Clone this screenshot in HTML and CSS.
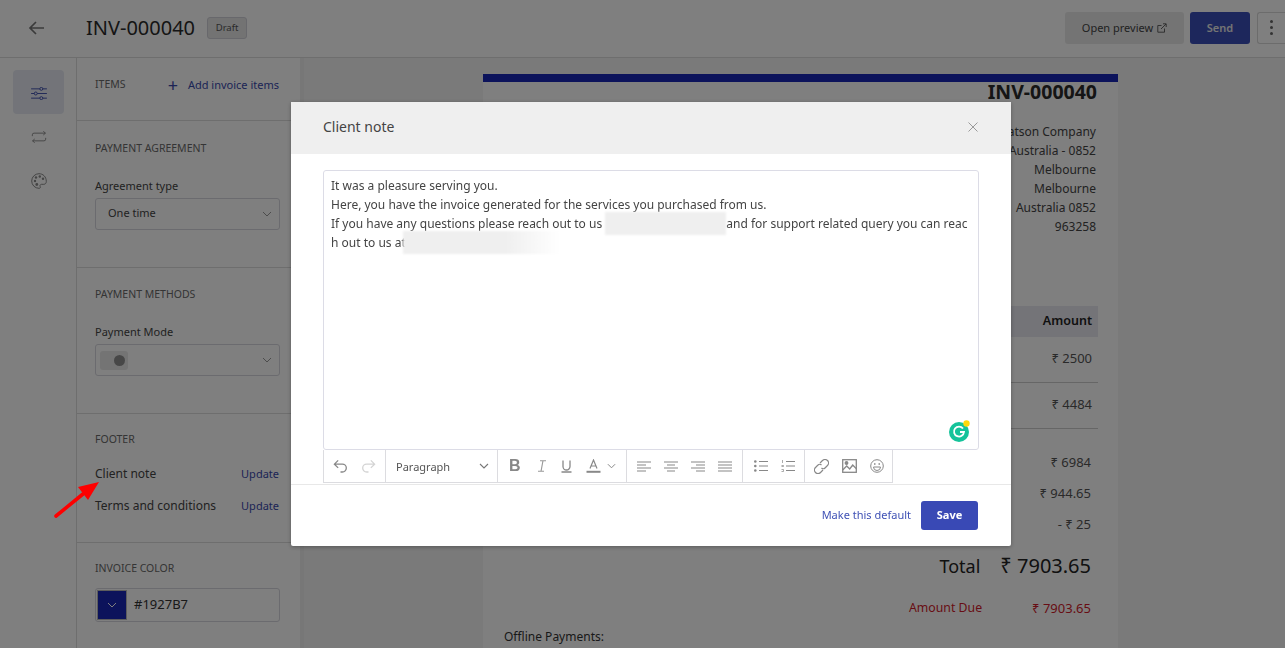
FILE: index.html
```html
<!DOCTYPE html>
<html lang="en">
<head>
<meta charset="utf-8">
<title>INV-000040</title>
<link rel="stylesheet" href="styles.css">
</head>
<body>
<div class="page">
  <header class="topbar">
    <svg class="back" width="18" height="16" viewBox="0 0 18 16"><path d="M16 8H2M8 2L2 8l6 6" fill="none" stroke="#777" stroke-width="1.7"/></svg>
    <h1 class="doc-title">INV-000040</h1>
    <span class="badge">Draft</span>
    <div class="top-actions">
      <button class="btn-preview">Open preview
        <svg width="10" height="10" viewBox="0 0 10 10"><path d="M7.5 5.5v3.7H.8V2.5h3.7M4 6l5-5M6 .8h3.2V4" fill="none" stroke="#555" stroke-width=".9"/></svg>
      </button>
      <button class="btn-send">Send</button>
      <button class="btn-more" aria-label="More"><i></i><i></i><i></i></button>
    </div>
  </header>
  <div class="workspace">
    <nav class="rail">
      <div class="rail-item active">
        <svg width="16" height="13" viewBox="0 0 17 14" fill="none" stroke="#3949ab" stroke-width="1"><path d="M0 2h17M0 7h17M0 12h17"/><circle cx="11" cy="2" r="1.6" fill="#e6e9f3"/><circle cx="5" cy="7" r="1.6" fill="#e6e9f3"/><circle cx="11" cy="12" r="1.6" fill="#e6e9f3"/></svg>
      </div>
      <div class="rail-item">
        <svg width="16" height="12" viewBox="0 0 17 14" fill="none" stroke="#8a8a8a" stroke-width="1.1"><path d="M.7 6V4.5A2 2 0 0 1 2.7 2.5H16M13.500 .3L16 2.500 13.500 4.700M16.300 8v1.500a2 2 0 0 1-2 2H1M3.500 9.300L1 11.500l2.500 2.200"/></svg>
      </div>
      <div class="rail-item">
        <svg width="16" height="16" viewBox="0 0 16 16"><path d="M8 .7a7.300 7.300 0 1 0 0 14.600c1.500 0 1.600-1 1.200-1.700-.6-1 .1-2.300 1.300-2.300h2.300c1.600 0 2.500-1.200 2.500-2.800C15.300 3.700 12 .7 8 .7z" fill="none" stroke="#8a8a8a" stroke-width="1"/><g fill="#8a8a8a"><circle cx="4" cy="8" r="1.200"/><circle cx="5" cy="4.500" r="1.200"/><circle cx="8.800" cy="3.500" r="1.200"/><circle cx="12" cy="5.800" r="1.200"/><circle cx="5.800" cy="11.500" r="1.400"/></g></svg>
      </div>
    </nav>
    <aside class="panel">
      <section class="sec sec-items">
        <h2 class="sec-title">ITEMS</h2>
        <a class="add-link"><span class="plus">+</span>Add invoice items</a>
      </section>
      <section class="sec sec-agreement">
        <h2 class="sec-title">PAYMENT AGREEMENT</h2>
        <label class="field-label">Agreement type</label>
        <div class="select">One time
          <svg class="chev" width="10" height="6" viewBox="0 0 10 6"><path d="M1 1l4 4 4-4" fill="none" stroke="#999"/></svg>
        </div>
      </section>
      <section class="sec sec-methods">
        <h2 class="sec-title">PAYMENT METHODS</h2>
        <label class="field-label">Payment Mode</label>
        <div class="select select-toggle"><span class="toggle"><i></i></span>
          <svg class="chev" width="10" height="6" viewBox="0 0 10 6"><path d="M1 1l4 4 4-4" fill="none" stroke="#999"/></svg>
        </div>
      </section>
      <section class="sec sec-footer">
        <h2 class="sec-title">FOOTER</h2>
        <div class="foot-row"><span>Client note</span><a>Update</a></div>
        <div class="foot-row"><span>Terms and conditions</span><a>Update</a></div>
      </section>
      <section class="sec sec-color">
        <h2 class="sec-title">INVOICE COLOR</h2>
        <div class="color-input">
          <span class="swatch"><svg width="10" height="6" viewBox="0 0 10 6"><path d="M1 1l4 4 4-4" fill="none" stroke="#fff"/></svg></span>
          <span class="hex">#1927B7</span>
        </div>
      </section>
    </aside>
    <div class="scroll-strip"></div>
    <main class="preview">
      <article class="paper">
        <h2 class="paper-title">INV-000040</h2>
        <address class="addr">
          <div>Watson Company</div>
          <div>Australia - 0852</div>
          <div>Melbourne</div>
          <div>Melbourne</div>
          <div>Australia 0852</div>
          <div>963258</div>
        </address>
        <div class="t-head">Amount</div>
        <div class="t-row">₹ 2500</div>
        <div class="t-row">₹ 4484</div>
        <div class="sums">
          <div>₹ 6984</div>
          <div>₹ 944.65</div>
          <div>- ₹ 25</div>
        </div>
        <div class="total"><span class="total-label">Total</span><span>₹ 7903.65</span></div>
        <div class="due"><span>Amount Due</span><span class="due-value">₹ 7903.65</span></div>
        <div class="offline">Offline Payments:</div>
      </article>
    </main>
  </div>
</div>

<div class="overlay">
  <div class="modal">
    <div class="modal-head">
      <span>Client note</span>
      <svg width="10" height="10" viewBox="0 0 10 10"><path d="M.5.5l9 9M9.500.5l-9 9" stroke="#999" stroke-width="1"/></svg>
    </div>
    <div class="modal-body">
      <div class="editor">
        <div>It was a pleasure serving you.</div>
        <div>Here, you have the invoice generated for the services you purchased from us.</div>
        <div>If you have any questions please reach out to us <span class="redact r1"></span>and for support related query you can reac</div>
        <div>h out to us at<span class="redact r2"></span></div>
        <span class="grammarly"><svg width="22" height="22" viewBox="0 0 22 22"><circle cx="10" cy="12" r="10" fill="#15c39a"/><path d="M14 8.500A5 5 0 1 0 15 12h-4" fill="none" stroke="#fff" stroke-width="1.800"/><circle cx="17.500" cy="3.500" r="3.200" fill="#ffd80a"/></svg></span>
      </div>
      <div class="toolbar">
        <div class="tb-group tb-hist">
          <svg width="15" height="14" viewBox="0 0 16 14" fill="none" stroke="#888" stroke-width="1.400"><path d="M5.500 1L1.500 5l4 4M1.500 5H10a4.200 4.200 0 0 1 0 8.400H8"/></svg>
          <svg width="15" height="14" viewBox="0 0 16 14" fill="none" stroke="#d4d4d4" stroke-width="1.400"><path d="M10.500 1l4 4-4 4M14.500 5H6a4.200 4.200 0 0 0 0 8.400h2"/></svg>
        </div>
        <div class="tb-group tb-format"><span>Paragraph</span><svg width="10" height="6" viewBox="0 0 10 6"><path d="M1 1l4 4 4-4" fill="none" stroke="#777" stroke-width="1.100"/></svg></div>
        <div class="tb-group tb-style">
          <b class="tb-b">B</b>
          <svg width="10" height="12" viewBox="0 0 10 12"><path d="M3 .7h6M1 11.300h6M6 .7L4 11.300" fill="none" stroke="#999" stroke-width="1.100"/></svg>
          <svg width="11" height="13" viewBox="0 0 11 13"><path d="M2 .5v6a3.500 3.500 0 0 0 7 0v-6M.5 12h10" fill="none" stroke="#888" stroke-width="1.300"/></svg>
          <svg width="15" height="14" viewBox="0 0 15 14"><path d="M4 9.500L7.500 1 11 9.500M5 7h5" fill="none" stroke="#888" stroke-width="1.200"/><path d="M.5 12.800h14" stroke="#888" stroke-width="2"/></svg>
          <svg width="9" height="6" viewBox="0 0 10 6"><path d="M1 1l4 4 4-4" fill="none" stroke="#888" stroke-width="1.100"/></svg>
        </div>
        <div class="tb-group tb-align">
          <svg width="14" height="11" viewBox="0 0 14 11" stroke="#888" stroke-width="1.200"><path d="M0 1h14M0 4h9M0 7h14M0 10h9"/></svg>
          <svg width="14" height="11" viewBox="0 0 14 11" stroke="#888" stroke-width="1.200"><path d="M0 1h14M3 4h8M0 7h14M3 10h8"/></svg>
          <svg width="14" height="11" viewBox="0 0 14 11" stroke="#888" stroke-width="1.200"><path d="M0 1h14M5 4h9M0 7h14M5 10h9"/></svg>
          <svg width="14" height="11" viewBox="0 0 14 11" stroke="#888" stroke-width="1.200"><path d="M0 1h14M0 4h14M0 7h14M0 10h14"/></svg>
        </div>
        <div class="tb-group tb-list">
          <svg width="14" height="12" viewBox="0 0 14 12"><g fill="#888"><circle cx="1.300" cy="1.500" r="1.300"/><circle cx="1.300" cy="6" r="1.300"/><circle cx="1.300" cy="10.500" r="1.300"/></g><path d="M5 1.500h9M5 6h9M5 10.500h9" stroke="#888" stroke-width="1.100"/></svg>
          <svg width="14" height="12" viewBox="0 0 14 12"><path d="M1.500 0v3M.5 5.500h2v1h-2M.5 9.500h2v2h-2" fill="none" stroke="#888" stroke-width=".7"/><path d="M5 1.500h9M5 6h9M5 10.500h9" stroke="#888" stroke-width="1.100"/></svg>
        </div>
        <div class="tb-group tb-insert">
          <svg width="15" height="15" viewBox="0 0 15 15" fill="none" stroke="#888" stroke-width="1.200"><path d="M6 4l2.500-2.500a2.400 2.400 0 0 1 5 5L11 9a2.400 2.400 0 0 1-3.500 0M9 11l-2.500 2.500a2.400 2.400 0 0 1-5-5L4 6a2.400 2.400 0 0 1 3.500 0"/></svg>
          <svg width="15" height="14" viewBox="0 0 15 14" fill="none" stroke="#888" stroke-width="1.300"><rect x=".7" y=".7" width="13.600" height="12.600"/><path d="M.7 11l4-4 3 3 3-4 4 4"/><circle cx="4.500" cy="4" r="1.300" fill="#888"/></svg>
          <svg width="14" height="14" viewBox="0 0 14 14" fill="none" stroke="#888" stroke-width="1"><circle cx="7" cy="7" r="6.300"/><path d="M3.500 8h7a3.500 3.500 0 0 1-7 0z"/><path d="M4 5h1.500M8.500 5H10" stroke-width="1.300"/></svg>
        </div>
      </div>
    </div>
    <div class="modal-foot">
      <a class="default-link">Make this default</a>
      <button class="btn-save">Save</button>
    </div>
  </div>
</div>

<svg class="annot-arrow" width="50" height="42" viewBox="0 0 50 42"><path d="M3 38L30 16" stroke="#fe0000" stroke-width="3.600" stroke-linecap="round"/><path d="M46 4L25 9 35 22z" fill="#fe0000"/></svg>
</body>
</html>
```
FILE: styles.css
```css
* { box-sizing: border-box; }
html, body { margin: 0; height: 100%; overflow: hidden; }
body { font-family: "Noto Sans", "Liberation Sans", sans-serif; color: #333; background: #fff; font-size: 12px; }
h1, h2 { margin: 0; font-weight: 400; }
a { color: #3949ab; }
.page { height: 648px; display: flex; flex-direction: column; }

.topbar { height: 58px; flex: none; display: flex; align-items: center; border-bottom: 1px solid #dcdcdc; padding: 0 0 2px 28px; background: #fff; }
.back { flex: none; }
.doc-title { font-size: 20px; margin-left: 40px; color: #2b2b2b; line-height: 1; }
.badge { margin-left: 12px; width: 40px; height: 22px; display: flex; align-items: center; justify-content: center; font-size: 9.500px; color: #555; background: #e6e6e6; border: 1px solid #d0d0d8; border-radius: 3px; }
.top-actions { margin-left: auto; display: flex; align-items: center; }
button { font-family: inherit; border: 0; }
.btn-preview { width: 119px; height: 32px; background: #e9e9e9; color: #444; font-size: 11px; border-radius: 3px; display: flex; align-items: center; justify-content: center; gap: 4px; }
.btn-send { width: 60px; height: 32px; margin-left: 6px; background: #3b4fb8; color: #e8e8e8; font-size: 11px; font-weight: 600; border-radius: 3px; }
.btn-more { width: 28px; height: 32px; margin-left: 7px; background: #fff; border: 1px solid #d8d8d8; border-right: 0; border-radius: 3px 0 0 3px; display: flex; flex-direction: column; align-items: center; justify-content: center; gap: 3px; padding: 0; }
.btn-more i { width: 3px; height: 3px; border-radius: 50%; background: #666; }

.workspace { flex: 1; display: flex; min-height: 0; }
.rail { width: 77px; flex: none; border-right: 1px solid #dcdcdc; padding: 12px 12px 0 13px; display: flex; flex-direction: column; background: #fff; }
.rail-item { width: 51px; height: 44px; padding-top: 2px; display: flex; align-items: center; justify-content: center; border-radius: 4px; }
.rail-item.active { background: #e6e9f3; }
.panel { width: 223px; flex: none; background: #fff; }
.scroll-strip { width: 4px; flex: none; background: #eeeeee; }
.sec { border-bottom: 1px solid #dcdcdc; padding: 0 20px 0 18px; }
.sec-title { font-size: 10.500px; line-height: 14px; color: #6a6a6a; }
.sec-items { height: 63px; display: flex; justify-content: space-between; padding-top: 19px; align-items: flex-start; }
.add-link { font-size: 11px; line-height: 14px; margin: 1px 1px 0 0; display: flex; align-items: center; }
.plus { font-size: 18px; line-height: 14px; margin-right: 10px; font-weight: 400; }
.sec-agreement { height: 147px; padding-top: 20px; }
.sec-methods { height: 146px; padding-top: 19px; }
.field-label { display: block; font-size: 11px; line-height: 14px; color: #444; margin-top: 24px; }
.select { margin-top: 5px; height: 32px; border: 1px solid #d6d6de; border-radius: 3px; display: flex; align-items: center; justify-content: space-between; padding: 0 6px 3px 12px; font-size: 11px; color: #444; }
.select-toggle { padding: 0 6px 0 4px; }
.toggle { width: 28px; height: 19px; border-radius: 3px; background: #e8e8e8; display: flex; align-items: center; justify-content: flex-end; padding-right: 3px; }
.toggle i { width: 11px; height: 11px; border-radius: 50%; background: #8f8f8f; }
.chev { margin: 3px 1px 0 0; }
.select-toggle .chev { margin-top: 0; }
.sec-footer { height: 129px; padding-top: 18px; }
.foot-row { display: flex; justify-content: space-between; align-items: center; height: 32px; font-size: 12px; color: #444; }
.foot-row:first-of-type { margin-top: 11px; }
.foot-row a { font-size: 11px; margin-right: 1px; }
.sec-color { border-bottom: 0; padding-top: 18px; }
.color-input { margin-top: 13px; height: 34px; border: 1px solid #d6d6de; border-radius: 3px; display: flex; align-items: center; gap: 7px; font-size: 13px; color: #333; padding-left: 1px; }
.hex { padding-bottom: 2px; }
.swatch { width: 30px; height: 30px; background: #1927b7; border: 1px solid #bbb; display: flex; align-items: center; justify-content: center; }

.preview { flex: 1; background: #f4f4f4; padding: 16px 0 0 179px; overflow: hidden; }
.paper { width: 635px; height: 700px; background: #fff; border-top: 8px solid #1927b7; padding: 0 21px; }
.paper-title { font-size: 19.500px; font-weight: 700; text-align: right; line-height: 22px; color: #2b2b2b; margin-top: -1px; }
.addr { font-style: normal; text-align: right; font-size: 12px; line-height: 19px; color: #444; margin: 19px 1px 0 0; }
.t-head { margin: 70px -1px 0 0; height: 31px; background: #e8e8f0; text-align: right; padding-right: 6px; font-size: 12.500px; font-weight: 600; line-height: 29px; color: #222; }
.t-row { height: 46px; border-bottom: 1px solid #ccc; text-align: right; padding-right: 6px; font-size: 13px; line-height: 43px; color: #555; margin-right: -1px; }
.sums { margin-top: 18px; text-align: right; padding-right: 6px; font-size: 13px; line-height: 31px; color: #555; }
.total { display: flex; justify-content: flex-end; gap: 20px; padding-right: 6px; margin-top: 11px; font-size: 20px; font-weight: 400; line-height: 30px; color: #222; }
.total-label { font-size: 18px; }
.due { display: flex; justify-content: flex-end; gap: 50px; padding-right: 6px; margin-top: 18px; font-size: 12.300px; line-height: 18px; color: #d11a2a; }
.due-value { font-size: 13px; }
.offline { margin-top: 11px; font-size: 12px; line-height: 18px; color: #333; }

.overlay { position: fixed; inset: 0; background: rgba(0, 0, 0, .5); padding: 102px 0 0 291px; }
.modal { width: 720px; height: 444px; background: #fff; box-shadow: 0 1px 4px rgba(0, 0, 0, .3); border-radius: 2px; display: flex; flex-direction: column; }
.modal-head { height: 52px; flex: none; background: #efefef; display: flex; align-items: center; justify-content: space-between; padding: 0 33px 3px 32px; font-size: 14px; color: #444; }
.modal-body { padding: 16px 32px 0; }
.editor { position: relative; height: 280px; border: 1px solid #dcdce6; border-radius: 3px; padding: 5px 7px; font-size: 12px; line-height: 19px; color: #444; white-space: nowrap; }
.editor > div { height: 19px; }
.redact { display: inline-block; vertical-align: middle; height: 23px; margin: -4px 0 -2px; background: #efefef; filter: blur(1px); }
.r1 { width: 121px; }
.r2 { width: 157px; margin-left: -3px; background: linear-gradient(90deg, #efefef 65%, #fff); }
.grammarly { position: absolute; right: 7px; bottom: 7px; line-height: 0; }
.toolbar { height: 33px; width: 570px; display: flex; border: 1px solid #dcdce0; border-top: 0; }
.tb-group { height: 100%; display: flex; align-items: center; border-right: 1px solid #dcdce0; }
.tb-group:last-child { border-right: 0; }
.tb-hist { width: 62px; padding-left: 9px; gap: 13px; }
.tb-format { width: 112px; padding: 0 8px 0 10px; justify-content: space-between; font-size: 11px; color: #555; }
.tb-style { width: 129px; padding-left: 11px; gap: 0; justify-content: flex-start; }
.tb-b { font-size: 16px; color: #888; width: 28px; font-family: "Liberation Sans", sans-serif; }
.tb-style svg:nth-of-type(1) { margin-right: 14px; }
.tb-style svg:nth-of-type(2) { margin-right: 14px; }
.tb-style svg:nth-of-type(3) { margin-right: 6px; }
.tb-align { width: 116px; padding-left: 10px; gap: 13px; }
.tb-list { width: 62px; padding-left: 11px; gap: 13px; }
.tb-insert { padding-left: 9px; gap: 13px; }
.modal-foot { margin-top: 1px; height: 62px; border-top: 1px solid #e8e8e8; display: flex; align-items: center; justify-content: flex-end; padding: 0 33px 1px 0; gap: 10px; }
.default-link { font-size: 11px; color: #3f51b5; padding-bottom: 2px; }
.btn-save { width: 57px; height: 29px; background: #3949b5; color: #fff; font-size: 11px; font-weight: 700; border-radius: 3px; padding-bottom: 2px; }

.annot-arrow { position: fixed; left: 53px; top: 478px; }
```
